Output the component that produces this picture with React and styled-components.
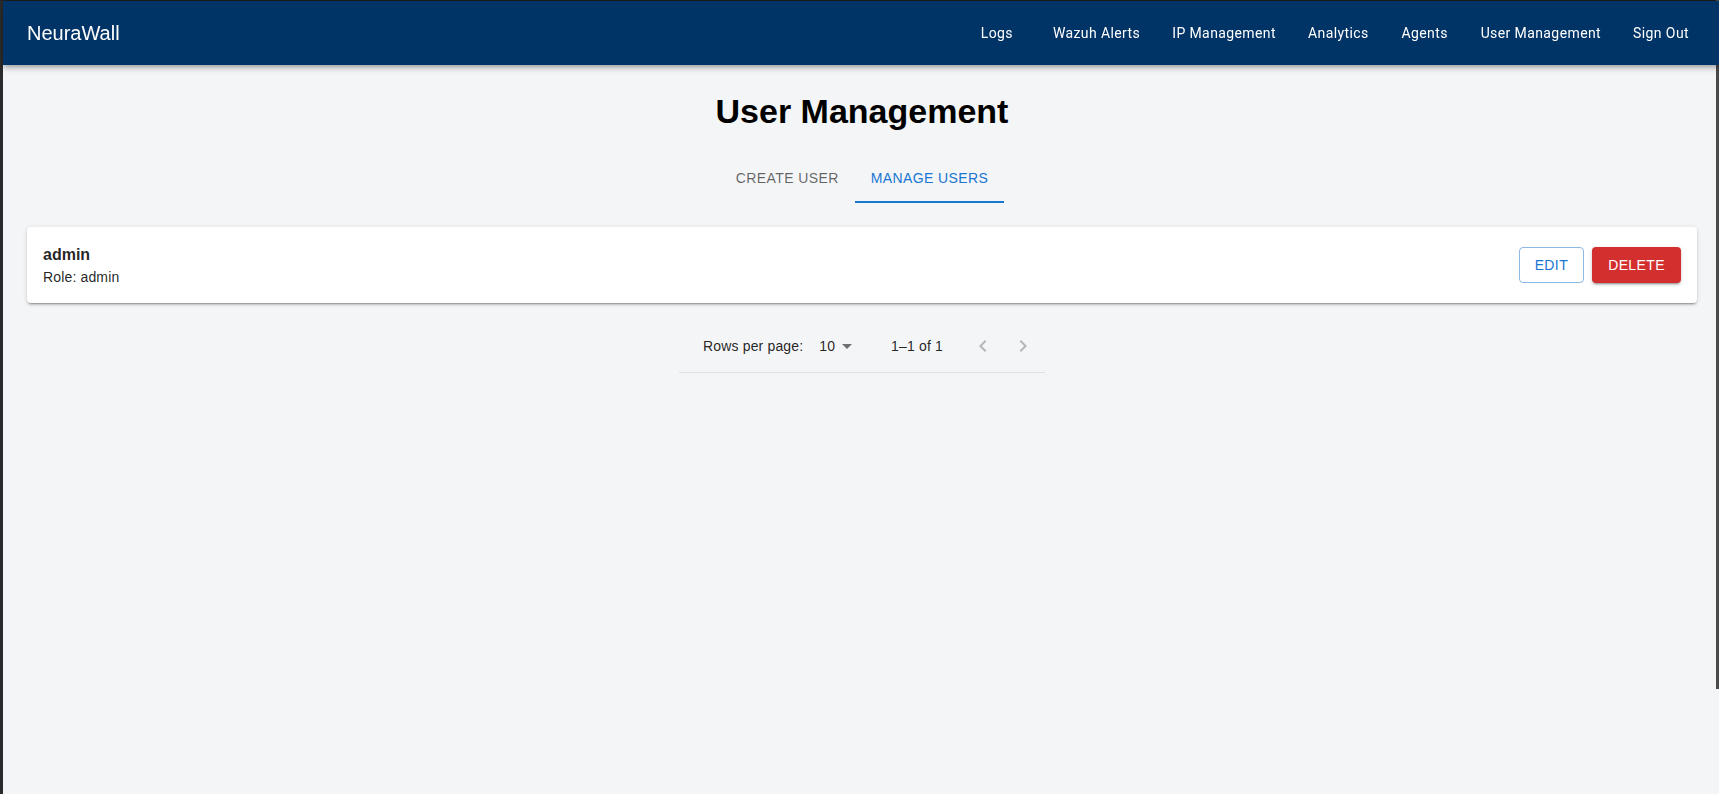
import React from "react";
import styled, { createGlobalStyle } from "styled-components";

const GlobalStyle = createGlobalStyle`
  html, body {
    margin: 0;
    padding: 0;
    background: #f4f5f7;
    overflow: hidden;
    font-family: "Liberation Sans", Arial, sans-serif;
  }
`;

const navLinks = [
  "Logs",
  "Wazuh Alerts",
  "IP Management",
  "Analytics",
  "Agents",
  "User Management",
  "Sign Out",
];

export default function App() {
  const [tab, setTab] = React.useState(1);

  return (
    <>
      <GlobalStyle />
      <Frame>
        <Page>
          <NavBar>
            <Brand>NeuraWall</Brand>
            <NavLinks>
              {navLinks.map((link) => (
                <NavButton key={link}>{link}</NavButton>
              ))}
            </NavLinks>
          </NavBar>
          <Main>
            <Title>User Management</Title>
            <Tabs>
              <Tab $active={tab === 0} onClick={() => setTab(0)}>
                Create User
              </Tab>
              <Tab $active={tab === 1} onClick={() => setTab(1)}>
                Manage Users
              </Tab>
            </Tabs>
            <UserCard>
              <UserInfo>
                <UserName>admin</UserName>
                <UserRole>Role: admin</UserRole>
              </UserInfo>
              <Actions>
                <OutlinedButton>Edit</OutlinedButton>
                <DangerButton>Delete</DangerButton>
              </Actions>
            </UserCard>
            <Pagination>
              <PagText>Rows per page:</PagText>
              <RowsSelect>
                10
                <DropIcon viewBox="0 0 24 24">
                  <path d="M7 10l5 5 5-5z" />
                </DropIcon>
              </RowsSelect>
              <PagText>1–1 of 1</PagText>
              <PagActions>
                <PageButton disabled>
                  <svg viewBox="0 0 24 24" width="24" height="24">
                    <path d="M15.41 7.41 14 6l-6 6 6 6 1.41-1.41L10.83 12z" />
                  </svg>
                </PageButton>
                <PageButton disabled>
                  <svg viewBox="0 0 24 24" width="24" height="24">
                    <path d="M10 6 8.59 7.41 13.17 12l-4.58 4.59L10 18l6-6z" />
                  </svg>
                </PageButton>
              </PagActions>
            </Pagination>
          </Main>
        </Page>
      </Frame>
      <ScrollThumb />
    </>
  );
}

const Frame = styled.div`
  border-left: 3px solid #2b2b2b;
  border-top: 1px solid #1c1c1c;
  width: 1718px;
  min-height: 793px;
  background: #f4f5f7;
`;

const Page = styled.div`
  display: flex;
  flex-direction: column;
`;

const ScrollThumb = styled.div`
  position: fixed;
  top: 0;
  right: 0;
  width: 3px;
  height: 689px;
  background: #4a4a4a;
`;

const NavBar = styled.header`
  height: 64px;
  padding: 0 24px;
  background: #003366;
  color: #fff;
  display: flex;
  align-items: center;
  justify-content: space-between;
  box-shadow: 0 2px 4px -1px rgba(0, 0, 0, 0.2),
    0 4px 5px 0 rgba(0, 0, 0, 0.14), 0 1px 10px 0 rgba(0, 0, 0, 0.12);
  position: relative;
  z-index: 1;
`;

const Brand = styled.div`
  font-size: 20px;
  font-weight: 500;
  font-family: "Liberation Sans", Arial, sans-serif;
`;

const NavLinks = styled.nav`
  display: flex;
  align-items: center;
  gap: 16px;
`;

const NavButton = styled.button`
  min-width: 64px;
  padding: 6px 8px;
  border: 0;
  background: transparent;
  color: #fff;
  font-family: Roboto, sans-serif;
  font-size: 14px;
  font-weight: 400;
  letter-spacing: 0.4px;
  line-height: 1.75;
  cursor: pointer;
`;

const Main = styled.main`
  padding: 25px 24px 0;
  display: flex;
  flex-direction: column;
  align-items: center;
`;

const Title = styled.h1`
  margin: 0;
  font-size: 34px;
  line-height: 42px;
  font-weight: 700;
  color: #000;
`;

const Tabs = styled.div`
  margin-top: 23px;
  display: flex;
`;

const Tab = styled.button`
  min-height: 48px;
  padding: 13px 16px 12px;
  min-width: 90px;
  border: 0;
  background: transparent;
  font-family: "Liberation Sans", Arial, sans-serif;
  font-size: 14px;
  line-height: 1.25;
  letter-spacing: 0.4px;
  text-transform: uppercase;
  color: ${(p) => (p.$active ? "#1976d2" : "rgba(0, 0, 0, 0.6)")};
  border-bottom: 2px solid ${(p) => (p.$active ? "#1976d2" : "transparent")};
  cursor: pointer;
`;

const UserCard = styled.section`
  align-self: stretch;
  margin-top: 24px;
  background: #fff;
  border-radius: 4px;
  padding: 16px;
  display: flex;
  align-items: center;
  justify-content: space-between;
  box-shadow: 0 3px 1px -2px rgba(0, 0, 0, 0.2),
    0 2px 2px 0 rgba(0, 0, 0, 0.14), 0 1px 5px 0 rgba(0, 0, 0, 0.12);
`;

const UserInfo = styled.div`
  display: flex;
  flex-direction: column;
`;

const UserName = styled.div`
  font-size: 16px;
  line-height: 24px;
  font-weight: 700;
  color: rgba(0, 0, 0, 0.87);
`;

const UserRole = styled.div`
  font-size: 14px;
  line-height: 20px;
  letter-spacing: 0.15px;
  color: rgba(0, 0, 0, 0.87);
`;

const Actions = styled.div`
  display: flex;
  gap: 8px;
`;

const BaseButton = styled.button`
  min-width: 64px;
  border-radius: 4px;
  font-family: "Liberation Sans", Arial, sans-serif;
  font-size: 14px;
  line-height: 1.75;
  letter-spacing: 0.4px;
  text-transform: uppercase;
  cursor: pointer;
`;

const OutlinedButton = styled(BaseButton)`
  padding: 5px 15px;
  background: transparent;
  color: #1976d2;
  border: 1px solid rgba(25, 118, 210, 0.5);
`;

const DangerButton = styled(BaseButton)`
  padding: 6px 16px;
  border: 0;
  background: #d32f2f;
  color: #fff;
  box-shadow: 0 3px 1px -2px rgba(0, 0, 0, 0.2),
    0 2px 2px 0 rgba(0, 0, 0, 0.14), 0 1px 5px 0 rgba(0, 0, 0, 0.12);
`;

const Pagination = styled.div`
  margin-top: 17px;
  min-height: 52px;
  padding: 0 2px 0 24px;
  display: flex;
  align-items: center;
  border-bottom: 1px solid #e0e0e0;
  font-size: 14px;
  color: rgba(0, 0, 0, 0.87);
`;

const PagText = styled.p`
  margin: 0;
  font-size: 14px;
  line-height: 1.43;
  letter-spacing: 0.15px;
`;

const RowsSelect = styled.div`
  margin: 0 32px 0 8px;
  padding: 0 24px 0 8px;
  position: relative;
  font-size: 14px;
  line-height: 1.43;
  letter-spacing: 0.15px;
`;

const DropIcon = styled.svg`
  position: absolute;
  right: 0;
  top: 50%;
  width: 24px;
  height: 24px;
  margin-top: -12px;
  fill: rgba(0, 0, 0, 0.54);
`;

const PagActions = styled.div`
  margin-left: 20px;
  display: flex;
`;

const PageButton = styled.button`
  width: 40px;
  height: 40px;
  padding: 8px;
  border: 0;
  border-radius: 50%;
  background: transparent;
  display: flex;
  align-items: center;
  justify-content: center;

  svg {
    fill: rgba(0, 0, 0, 0.26);
  }
`;
